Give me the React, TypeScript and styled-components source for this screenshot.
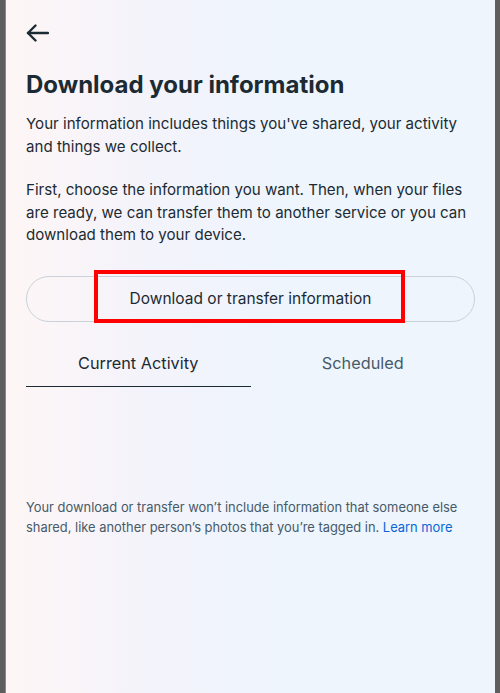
import React, { useState } from "react";
import styled, { createGlobalStyle } from "styled-components";

const Global = createGlobalStyle`
  html, body { margin: 0; padding: 0; height: 100%; }
  body { background: #5e5e5e; font-family: Inter, "Noto Sans", sans-serif; }
  #root { height: 100%; }
`;

const Frame = styled.div`
  height: 693px;
  display: flex;
  background: #5e5e5e;
`;

const Screen = styled.div`
  margin: 0 5px 0 5px;
  flex: 1;
  border-left: 1px solid #8a8a8a;
  background: linear-gradient(90deg, #fef6f6 0%, #f3f3fb 30%, #eef5fd 60%, #eef5fd 100%);
  display: flex;
  flex-direction: column;
  padding: 0 20px 0 20px;
  color: #1c2b33;
`;

const BackButton = styled.button`
  margin-top: 22px;
  width: 26px;
  height: 22px;
  padding: 0;
  border: none;
  background: transparent;
  display: flex;
  align-items: center;
  cursor: pointer;
`;

const Title = styled.h1`
  margin: 26px 0 0 0;
  font-size: 24px;
  line-height: 30px;
  font-weight: 700;
  letter-spacing: 0;
  color: #1c2b33;
`;

const Para = styled.p<{ $top: number }>`
  margin: ${(p) => p.$top}px 0 0 0;
  font-size: 15.1px;
  line-height: 22.5px;
  color: #1c2b33;
`;

const ButtonWrap = styled.div`
  position: relative;
  margin-top: 29px;
`;

const PillButton = styled.button`
  width: 100%;
  height: 46px;
  border-radius: 23px;
  border: 1px solid #c9d1d9;
  background: transparent;
  font-family: Inter, "Noto Sans", sans-serif;
  font-size: 15.5px;
  color: #1c2b33;
  cursor: pointer;
`;

const Highlight = styled.div`
  position: absolute;
  box-sizing: border-box;
  left: 68px;
  top: -6px;
  width: 311px;
  height: 53px;
  border: 4px solid #ff0000;
  pointer-events: none;
`;

const Tabs = styled.div`
  display: flex;
  margin-top: 23px;
`;

const Tab = styled.button<{ $active: boolean }>`
  flex: 1;
  height: 42px;
  padding: 0 0 4px 0;
  border: none;
  background: transparent;
  border-bottom: 1.5px solid ${(p) => (p.$active ? "#1c2b33" : "transparent")};
  font-family: Inter, "Noto Sans", sans-serif;
  font-size: 16.3px;
  color: ${(p) => (p.$active ? "#1c2b33" : "#465a69")};
  cursor: pointer;
`;

const Footer = styled.p`
  margin: 111px 0 0 0;
  font-size: 12.9px;
  line-height: 20px;
  color: #465a69;
`;

const Link = styled.a`
  color: #0a66d8;
  text-decoration: none;
`;

export default function App() {
  const [tab, setTab] = useState(0);
  return (
    <>
      <Global />
      <Frame>
        <Screen>
          <BackButton aria-label="Back">
            <svg width="23" height="18" viewBox="0 0 23 18" fill="none">
              <path d="M2 9H22" stroke="#1c2b33" strokeWidth="2.4" strokeLinecap="round" />
              <path d="M9.5 1.5L2 9L9.5 16.5" stroke="#1c2b33" strokeWidth="2.4" strokeLinecap="round" strokeLinejoin="round" />
            </svg>
          </BackButton>
          <Title>Download your information</Title>
          <Para $top={13}>
            Your information includes things you've shared, your activity and things we collect.
          </Para>
          <Para $top={21}>
            First, choose the information you want. Then, when your files are ready, we can transfer them to another service or you can download them to your device.
          </Para>
          <ButtonWrap>
            <PillButton>Download or transfer information</PillButton>
            <Highlight />
          </ButtonWrap>
          <Tabs>
            <Tab $active={tab === 0} onClick={() => setTab(0)}>Current Activity</Tab>
            <Tab $active={tab === 1} onClick={() => setTab(1)}>Scheduled</Tab>
          </Tabs>
          <Footer>
            Your download or transfer won’t include information that someone else shared, like another person’s photos that you’re tagged in. <Link href="#">Learn more</Link>
          </Footer>
        </Screen>
      </Frame>
    </>
  );
}
